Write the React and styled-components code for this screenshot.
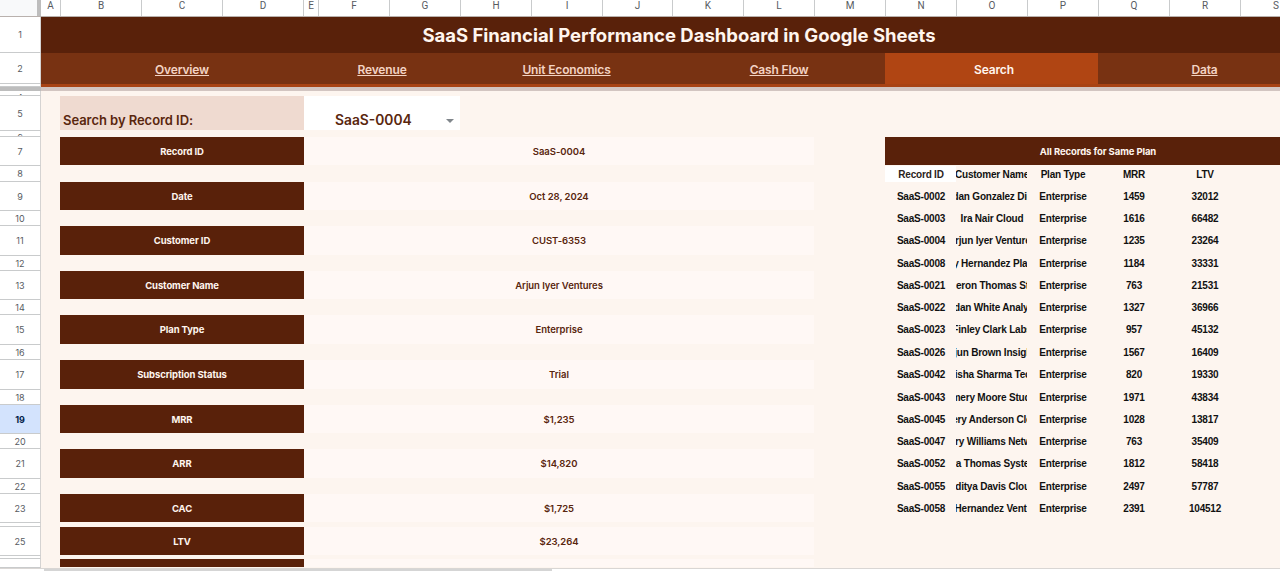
import React from 'react'
import styled, { createGlobalStyle } from 'styled-components'

const columns = [
  ['A', 20], ['B', 81], ['C', 81], ['D', 81], ['E', 15], ['F', 71], ['G', 71],
  ['H', 71], ['I', 71], ['J', 70], ['K', 71], ['L', 71], ['M', 71], ['N', 71],
  ['O', 71], ['P', 71], ['Q', 71], ['R', 71], ['S', 71],
]

const tabs = [
  { name: 'Overview', width: 263, pad: 19 },
  { name: 'Revenue', width: 156 },
  { name: 'Unit Economics', width: 213 },
  { name: 'Cash Flow', width: 212 },
  { name: 'Search', width: 213, pad: 5, active: true },
  { name: 'Data', width: 213 },
]

const plan = (id, customer, mrr, ltv) => [`SaaS-${id}`, customer, 'Enterprise', mrr, ltv]

const rows = [
  { n: 8, height: 16, head: true, record: ['Record ID', 'Customer Name', 'Plan Type', 'MRR', 'LTV'] },
  { n: 9, height: 29, label: 'Date', value: 'Oct 28, 2024', record: plan('0002', 'Jordan Gonzalez Digital', '1459', '32012') },
  { n: 10, height: 15, record: plan('0003', 'Ira Nair Cloud', '1616', '66482') },
  { n: 11, height: 30, label: 'Customer ID', value: 'CUST-6353', record: plan('0004', 'Arjun Iyer Ventures', '1235', '23264') },
  { n: 12, height: 15, record: plan('0008', 'Avery Hernandez Platform', '1184', '33331') },
  { n: 13, height: 29, label: 'Customer Name', value: 'Arjun Iyer Ventures', record: plan('0021', 'Cameron Thomas Studio', '763', '21531') },
  { n: 14, height: 15, record: plan('0022', 'Jordan White Analytics', '1327', '36966') },
  { n: 15, height: 30, label: 'Plan Type', value: 'Enterprise', record: plan('0023', 'Finley Clark Labs', '957', '45132') },
  { n: 16, height: 15, record: plan('0026', 'Arjun Brown Insights', '1567', '16409') },
  { n: 17, height: 30, label: 'Subscription Status', value: 'Trial', record: plan('0042', 'Aisha Sharma Tech', '820', '19330') },
  { n: 18, height: 15, record: plan('0043', 'Emery Moore Studio', '1971', '43834') },
  { n: 19, height: 29, label: 'MRR', value: '$1,235', active: true, record: plan('0045', 'Avery Anderson Cloud', '1028', '13817') },
  { n: 20, height: 15, record: plan('0047', 'Avery Williams Network', '763', '35409') },
  { n: 21, height: 30, label: 'ARR', value: '$14,820', record: plan('0052', 'Diya Thomas Systems', '1812', '58418') },
  { n: 22, height: 15, record: plan('0055', 'Aditya Davis Cloud', '2497', '57787') },
  { n: 23, height: 29, label: 'CAC', value: '$1,725', record: plan('0058', 'Kai Hernandez Ventures', '2391', '104512') },
  { n: '', height: 4 },
  { n: 25, height: 29, label: 'LTV', value: '$23,264' },
  { n: '', height: 3 },
  { n: '', height: 9, label: ' ', value: ' ' },
]

function SheetRow({ row }) {
  return (
    <Row height={row.height}>
      <RowNumber $active={row.active}>{row.n}</RowNumber>
      <Margin />
      <Label $filled={row.label}>{row.label}</Label>
      <Value $filled={row.label}>{row.value}</Value>
      <Gap />
      {row.record && row.record.map((text, i) => (
        <RecordCell key={i} $head={row.head} $white={row.head && i === 0}>
          <span>{text}</span>
        </RecordCell>
      ))}
    </Row>
  )
}

function App() {
  return (
    <>
      <GlobalStyle />
      <Sheet>
        <ColumnHeader>
          <Corner />
          {columns.map(([name, width]) => (
            <ColumnName key={name} width={width}>{name}</ColumnName>
          ))}
        </ColumnHeader>

        <Row height={36}>
          <RowNumber>1</RowNumber>
          <Title><span>SaaS Financial Performance Dashboard in Google Sheets</span></Title>
        </Row>
        <Row height={31}>
          <RowNumber>2</RowNumber>
          {tabs.map((tab) => (
            <Tab key={tab.name} width={tab.width} $pad={tab.pad} $active={tab.active}>
              <span>{tab.name}</span>
            </Tab>
          ))}
        </Row>
        <Row height={3}>
          <RowNumber />
          <Accent />
        </Row>
        <FrozenBar>
          <FrozenHandle />
        </FrozenBar>

        <Row height={5}><RowNumber $clipped>4</RowNumber></Row>
        <Row height={35}>
          <RowNumber>5</RowNumber>
          <Margin />
          <SearchLabel>Search by Record ID:</SearchLabel>
          <SearchSelect>
            <span>SaaS-0004</span>
            <Arrow />
          </SearchSelect>
        </Row>
        <Row height={6}><RowNumber $clipped>6</RowNumber></Row>

        <Row height={29}>
          <RowNumber>7</RowNumber>
          <Margin />
          <Label $filled>Record ID</Label>
          <Value $filled>SaaS-0004</Value>
          <Gap />
          <RecordsTitle>All Records for Same Plan</RecordsTitle>
        </Row>
        {rows.map((row, i) => <SheetRow key={i} row={row} />)}

        <Scrollbar>
          <Thumb />
        </Scrollbar>
      </Sheet>
    </>
  )
}

export default App

const GlobalStyle = createGlobalStyle`
  * {
    box-sizing: border-box;
  }
  body {
    margin: 0;
    overflow: hidden;
  }
`

const Sheet = styled.div`
  width: 1280px;
  height: 571px;
  overflow: hidden;
  display: flex;
  flex-direction: column;
  background: #fdf5ef;
  font-family: "Inter", "Liberation Sans", sans-serif;
`

const ColumnHeader = styled.div`
  display: flex;
  flex: none;
  height: 17px;
  background: #fff;
  border-bottom: 1px solid #b9b1ad;
`

const Corner = styled.div`
  flex: none;
  width: 41px;
  background: #f8f9fa;
  border-right: 4px solid #bdbdbd;
`

const ColumnName = styled.div`
  flex: none;
  width: ${props => props.width}px;
  border-right: 1px solid #c9cbcc;
  color: #575b5f;
  font-family: "Roboto", sans-serif;
  font-size: 10px;
  line-height: 12px;
  text-align: center;
`

const Row = styled.div`
  display: flex;
  flex: none;
  height: ${props => props.height}px;
`

const RowNumber = styled.div`
  display: flex;
  flex: none;
  align-items: ${props => props.$clipped ? 'flex-start' : 'center'};
  justify-content: center;
  width: 41px;
  padding-top: ${props => props.$clipped ? 1 : 0}px;
  overflow: hidden;
  border-right: 1px solid #d5d3d2;
  border-bottom: 1px solid #c9cbcc;
  background: ${props => props.$active ? '#d3e3fd' : '#fff'};
  color: ${props => props.$active ? '#041e49' : '#575b5f'};
  font-size: 9px;
  font-weight: ${props => props.$active ? 700 : 400};
`

const Title = styled.div`
  display: flex;
  flex: none;
  align-items: center;
  justify-content: center;
  width: 1276px;
  background: #59210a;
  color: #fff5ee;
  font-size: 18.5px;
  font-weight: 700;
  white-space: nowrap;
`

const Tab = styled.div`
  display: flex;
  flex: none;
  align-items: center;
  justify-content: center;
  width: ${props => props.width}px;
  padding-top: 1px;
  padding-left: ${props => props.$pad || 0}px;
  background: ${props => props.$active ? '#b04513' : '#783212'};
  color: ${props => props.$active ? '#fff5ee' : '#f3d3c3'};
  font-size: 12px;
  font-weight: 600;
  letter-spacing: -0.15px;
  text-decoration: ${props => props.$active ? 'none' : 'underline'};
  text-underline-offset: 1px;
`

const Accent = styled.div`
  flex: 1;
  background: #a84314;
`

const FrozenBar = styled.div`
  flex: none;
  height: 4px;
  background: #d2c5c1;
`

const FrozenHandle = styled.div`
  width: 41px;
  height: 4px;
  background: #bdbdbd;
`

const Margin = styled.div`
  flex: none;
  width: 19px;
`

const SearchLabel = styled.div`
  flex: none;
  width: 244px;
  height: 34px;
  padding: 16px 0 0 3px;
  background: #efdad0;
  color: #59260e;
  font-size: 13px;
  font-weight: 600;
  line-height: 17px;
  letter-spacing: -0.05px;
`

const SearchSelect = styled.div`
  display: flex;
  flex: none;
  width: 156px;
  height: 34px;
  padding: 16px 6px 0 31px;
  justify-content: space-between;
  background: #fff;
  color: #59260e;
  font-size: 13.8px;
  font-weight: 600;
  line-height: 17px;
`

const Arrow = styled.i`
  width: 0;
  height: 0;
  margin-top: 7px;
  border: 4px solid transparent;
  border-top-color: #80868b;
  border-bottom: none;
`

const Label = styled.div`
  flex: none;
  display: flex;
  align-items: center;
  justify-content: center;
  width: 244px;
  margin-bottom: 1px;
  background: ${props => props.$filled ? '#59210a' : 'transparent'};
  color: #fff5ee;
  font-size: 9.5px;
  font-weight: 700;
  letter-spacing: -0.1px;
`

const Value = styled.div`
  flex: none;
  display: flex;
  align-items: center;
  justify-content: center;
  width: 510px;
  margin-bottom: 1px;
  background: ${props => props.$filled ? '#fff8f5' : 'transparent'};
  color: #59260e;
  font-size: 9.5px;
  font-weight: 600;
  letter-spacing: -0.05px;
`

const Gap = styled.div`
  flex: none;
  width: 71px;
`

const RecordsTitle = styled.div`
  flex: none;
  width: 426px;
  margin-bottom: 1px;
  background: #59210a;
  color: #fff5ee;
  font-size: 9.5px;
  font-weight: 700;
  letter-spacing: -0.1px;
  line-height: 29px;
  text-align: center;
`

const RecordCell = styled.div`
  display: flex;
  flex: none;
  align-items: center;
  justify-content: center;
  width: 71px;
  padding: ${props => props.$head ? '1px 0 0 1px' : '0 0 1px 1px'};
  overflow: hidden;
  background: ${props => props.$white ? '#fff' : 'transparent'};
  color: ${props => props.$white ? '#2b2320' : '#111'};
  font-family: "Liberation Sans", Arial, sans-serif;
  font-size: 10px;
  font-weight: 700;
  letter-spacing: -0.2px;
  white-space: nowrap;
`

const Scrollbar = styled.div`
  flex: none;
  height: 3px;
  padding-left: 44px;
  background: #fff;
  border-top: 1px solid #d9d6d4;
`

const Thumb = styled.div`
  width: 508px;
  height: 2px;
  background: #d5d5d5;
`
